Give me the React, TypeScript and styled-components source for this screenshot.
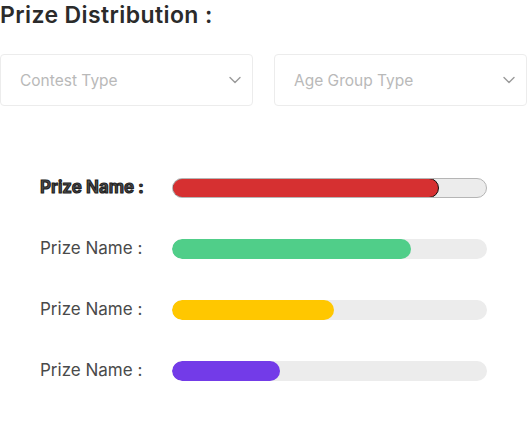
import React from "react";
import styled, { createGlobalStyle, css } from "styled-components";

const Global = createGlobalStyle`
  html, body { margin: 0; padding: 0; background: #fff; }
  body { font-family: Inter, "Open Sans", sans-serif; }
`;

const Page = styled.div`
  width: 527px;
  display: flex;
  flex-direction: column;
`;

const Title = styled.h2`
  margin: 0;
  padding-top: 1px;
  font-size: 23px;
  font-weight: 600;
  letter-spacing: 0.4px;
  color: #2b2b2b;
  line-height: 28px;
`;

const Filters = styled.div`
  margin-top: 25px;
  display: grid;
  grid-template-columns: 253px 253px;
  column-gap: 21px;
`;

const Select = styled.div`
  height: 52px;
  box-sizing: border-box;
  border: 1px solid #ececec;
  border-radius: 4px;
  display: flex;
  align-items: center;
  justify-content: space-between;
  padding: 0 10px 0 19px;
  color: #b9b9b9;
  font-size: 15.5px;
`;

const Bars = styled.div`
  margin-top: 72px;
  padding-left: 40px;
  display: flex;
  flex-direction: column;
  gap: 41px;
`;

const Row = styled.div`
  display: grid;
  grid-template-columns: 132px 315px;
  align-items: center;
  height: 20px;
`;

const Label = styled.span<{ $active?: boolean }>`
  font-size: 17px;
  color: #4a4a4a;
  white-space: nowrap;
  margin-top: -2px;
  ${(p) =>
    p.$active &&
    css`
      font-weight: 600;
      color: #555;
      -webkit-text-stroke: 1.2px #222;
      letter-spacing: 0px;
    `}
`;

const Track = styled.div<{ $active?: boolean }>`
  height: 20px;
  box-sizing: border-box;
  border-radius: 10px;
  background: #ececec;
  border: ${(p) => (p.$active ? "1px solid #b5b5b5" : "none")};
  display: flex;
  overflow: hidden;
`;

const Fill = styled.div<{ $color: string; $active?: boolean }>`
  height: 100%;
  box-sizing: border-box;
  border-radius: 10px;
  background: ${(p) => p.$color};
  ${(p) =>
    p.$active &&
    css`
      border: 1px solid #111;
      margin: -1px 0 0 -1px;
      height: 20px;
    `}
`;

const Chevron = () => (
  <svg width="14" height="14" viewBox="0 0 14 14" fill="none">
    <path d="M2 4.5 L7 9.5 L12 4.5" stroke="#9a9a9a" strokeWidth="1.4" strokeLinecap="round" strokeLinejoin="round" />
  </svg>
);

const prizes = [
  { color: "#d63031", pct: 85.4, active: true },
  { color: "#50ce89", pct: 76, active: false },
  { color: "#ffc700", pct: 51.5, active: false },
  { color: "#733be8", pct: 34.3, active: false },
];

export default function App() {
  return (
    <Page>
      <Global />
      <Title>Prize Distribution :</Title>
      <Filters>
        <Select>
          <span>Contest Type</span>
          <Chevron />
        </Select>
        <Select>
          <span>Age Group Type</span>
          <Chevron />
        </Select>
      </Filters>
      <Bars>
        {prizes.map((p, i) => (
          <Row key={i}>
            <Label $active={p.active}>Prize Name :</Label>
            <Track $active={p.active}>
              <Fill $color={p.color} $active={p.active} style={{ width: `${p.pct}%` }} />
            </Track>
          </Row>
        ))}
      </Bars>
    </Page>
  );
}
